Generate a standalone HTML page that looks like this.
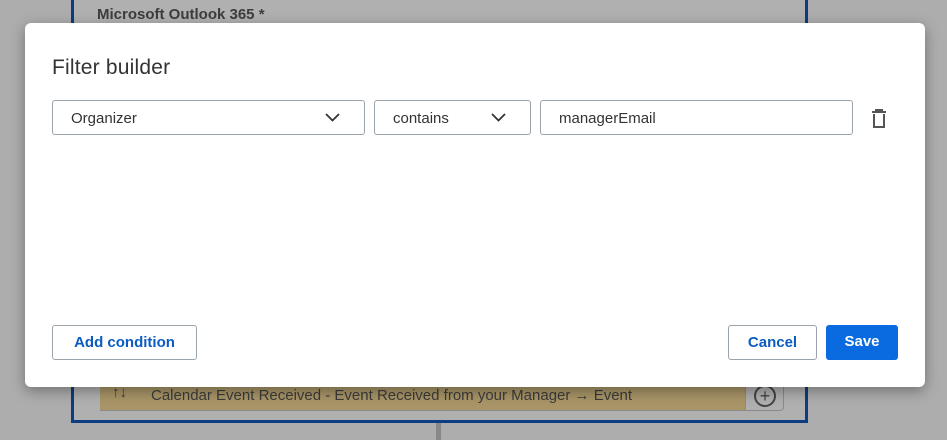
<!DOCTYPE html>
<html><head><style>
body{margin:0;width:947px;height:440px;background:#adadad;position:relative;overflow:hidden;font-family:"Liberation Sans",sans-serif;}
.card{position:absolute;left:71px;top:-10px;width:731px;height:430px;border:3px solid #0c3c82;border-top:none;background:#b0b0b0;}
.ttl{position:absolute;left:97px;top:6px;font-size:15px;font-weight:bold;color:#3d3d3d;}
.bar{position:absolute;left:100px;top:380px;width:645px;height:30px;background:#a99567;border-bottom:1px solid #8a8a8a;}
.bar span{position:absolute;left:51px;top:7px;font-size:15px;color:#3b3b3b;}
.plus{position:absolute;left:745px;top:380px;width:37px;height:30px;border:1px solid #8a8a8a;border-top:none;border-radius:0 0 4px 0;}
.plus div{position:absolute;left:8px;top:5px;width:18px;height:18px;border:2px solid #444;border-radius:50%;text-align:center;line-height:18px;font-size:18px;color:#444;}
.modal{position:absolute;left:25px;top:23px;width:900px;height:364px;background:#fff;border-radius:6px;box-shadow:0 4px 14px rgba(0,0,0,.35);}
h1{position:absolute;left:27px;top:33px;margin:0;font-size:21px;font-weight:normal;color:#333;letter-spacing:.2px;}
.f{position:absolute;top:77px;height:35px;border:1px solid #9ba3ab;border-radius:3px;box-sizing:border-box;font-size:15px;color:#333;padding:9px 18px;}
.chev{position:absolute;right:24px;top:12px;}
.btn{position:absolute;top:302px;height:35px;box-sizing:border-box;border-radius:3px;font-size:15px;font-weight:bold;text-align:center;line-height:33px;}
</style></head><body>
<div class="card"></div>
<div class="ttl">Microsoft Outlook 365 *</div>
<div class="bar"><span>Calendar Event Received - Event Received from your Manager → Event</span><span style="left:12px;top:4px;font-weight:bold">↑↓</span></div>
<div class="plus"><div>+</div></div>
<div style="position:absolute;left:436px;top:423px;width:5px;height:17px;background:#888"></div>
<div class="modal">
<h1>Filter builder</h1>
<div class="f" style="left:27px;width:313px">Organizer<svg class="chev" width="15" height="9" viewBox="0 0 15 9"><path d="M1 1l6.5 6.5L14 1" fill="none" stroke="#333" stroke-width="1.8"/></svg></div>
<div class="f" style="left:349px;width:157px">contains<svg class="chev" width="15" height="9" viewBox="0 0 15 9"><path d="M1 1l6.5 6.5L14 1" fill="none" stroke="#333" stroke-width="1.8"/></svg></div>
<div class="f" style="left:515px;width:313px">managerEmail</div>
<svg style="position:absolute;left:846px;top:86px" width="16" height="20" viewBox="0 0 16 20"><path d="M1 3h14M5 3V1h6v2M3 5v13h10V5" fill="none" stroke="#555" stroke-width="2"/></svg>
<div class="btn" style="left:27px;width:145px;border:1px solid #9ba3ab;color:#0b5cc2">Add condition</div>
<div class="btn" style="left:703px;width:89px;border:1px solid #9ba3ab;color:#0b5cc2">Cancel</div>
<div class="btn" style="left:801px;width:72px;background:#0a6ae0;color:#fff">Save</div>
</div>
</body></html>
